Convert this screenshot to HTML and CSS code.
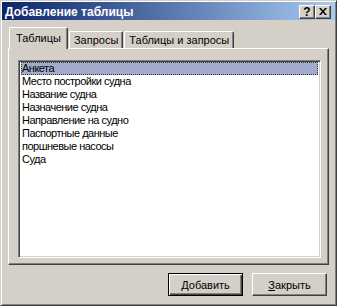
FILE: index.html
```html
<!DOCTYPE html>
<html lang="ru">

<head>
    <meta charset="UTF-8">
    <meta name="viewport" content="width=device-width, initial-scale=1.0">
    <title>Добавление таблицы</title>
    <link rel="stylesheet" href="styles.css">
</head>

<body>
    <div class="window">
        <div class="titlebar">
            <span class="title">Добавление таблицы</span>
            <div class="caption-btns">
                <button class="cap-btn help">?</button>
                <button class="cap-btn close">
                    <svg width="8" height="7" viewBox="0 0 8 7">
                        <path d="M0 0h2l2 2.5 2-2.5h2l-3 3.5 3 3.5h-2l-2-2.5-2 2.5h-2l3-3.5z" fill="#000" />
                    </svg>
                </button>
            </div>
        </div>
        <div class="content">
            <div class="tabs">
                <div class="tab active">Таблицы</div>
                <div class="tab">Запросы</div>
                <div class="tab">Таблицы и запросы</div>
            </div>
            <div class="panel">
                <ul class="listbox">
                    <li class="selected">Анкета</li>
                    <li>Место постройки судна</li>
                    <li>Название судна</li>
                    <li>Назначение судна</li>
                    <li>Направление на судно</li>
                    <li>Паспортные данные</li>
                    <li>поршневые насосы</li>
                    <li>Суда</li>
                </ul>
            </div>
            <div class="actions">
                <button class="btn default"><u>Д</u>обавить</button>
                <button class="btn"><u>З</u>акрыть</button>
            </div>
        </div>
    </div>
</body>

</html>
```

FILE: styles.css
```css
body {
    margin: 0;
    padding: 0;
    font-family: "Liberation Sans", Arial, sans-serif;
    font-size: 11px;
    background-color: #d4d0c8;
}

.window {
    width: 337px;
    height: 306px;
    box-sizing: border-box;
    padding: 1px;
    display: flex;
    flex-direction: column;
    background-color: #d4d0c8;
    border: 1px solid;
    border-color: #d4d0c8 #404040 #404040 #d4d0c8;
    box-shadow: inset 1px 1px #fff, inset -1px -1px #808080;
}

/* title bar */
.titlebar {
    height: 18px;
    display: flex;
    align-items: center;
    justify-content: space-between;
    padding: 1px 4px 0 3px;
    box-sizing: border-box;
    background: linear-gradient(to right, #0a246a, #a6caf0);
}

.title {
    color: #fff;
    font-weight: bold;
    font-size: 12px;
}

.caption-btns {
    display: flex;
}

.cap-btn {
    width: 16px;
    height: 14px;
    padding: 0;
    display: flex;
    align-items: center;
    justify-content: center;
    background-color: #d4d0c8;
    border: 1px solid;
    border-color: #fff #404040 #404040 #fff;
    box-shadow: inset -1px -1px #808080;
    font-family: "Liberation Sans", Arial, sans-serif;
    font-weight: bold;
    font-size: 12px;
    line-height: 1;
    color: #000;
}

/* body of dialog */
.content {
    flex: 1;
    display: flex;
    flex-direction: column;
    padding: 0 6px;
}

.tabs {
    display: flex;
    align-items: flex-end;
    padding: 7px 0 0 1px;
}

.tab {
    height: 16px;
    padding: 0 4px;
    margin-left: 1px;
    display: flex;
    align-items: center;
    border: 1px solid;
    border-bottom: none;
    border-color: #fff #404040 #404040 #fff;
    border-radius: 2px 2px 0 0;
    box-shadow: inset -1px 0 #808080;
    color: #000;
    white-space: nowrap;
}

.tab.active {
    height: 19px;
    padding: 0 6px 2px;
    margin-left: 0;
    margin-bottom: -1px;
    position: relative;
    z-index: 1;
    background-color: #d4d0c8;
}

.panel {
    flex: 1;
    display: flex;
    padding: 11px 7px 6px 9px;
    border: 1px solid;
    border-color: #fff #404040 #404040 #fff;
    box-shadow: inset -1px -1px #808080;
}

.listbox {
    flex: 1;
    margin: 0;
    list-style: none;
    background-color: #fff;
    border: 1px solid;
    border-color: #808080 #fff #fff #808080;
    box-shadow: inset 1px 1px #404040, inset -1px -1px #d4d0c8;
    padding: 1px 2px;
}

.listbox li {
    height: 13px;
    line-height: 13px;
    padding-left: 1px;
    color: #000;
    letter-spacing: -0.5px;
    white-space: nowrap;
}

.listbox li.selected {
    background-color: #a3abcc;
    outline: 1px dotted #333;
    outline-offset: -1px;
}

.actions {
    display: flex;
    justify-content: flex-end;
    gap: 9px;
    padding: 8px 2px 8px 0;
}

.btn {
    width: 75px;
    height: 23px;
    padding: 0;
    background-color: #d4d0c8;
    border: 1px solid;
    border-color: #fff #404040 #404040 #fff;
    box-shadow: inset -1px -1px #808080;
    font-family: "Liberation Sans", Arial, sans-serif;
    font-size: 11px;
    color: #000;
}

.btn.default {
    border-color: #000;
    box-shadow: inset 1px 1px #fff, inset -1px -1px #404040, inset -2px -2px #808080;
}
```
